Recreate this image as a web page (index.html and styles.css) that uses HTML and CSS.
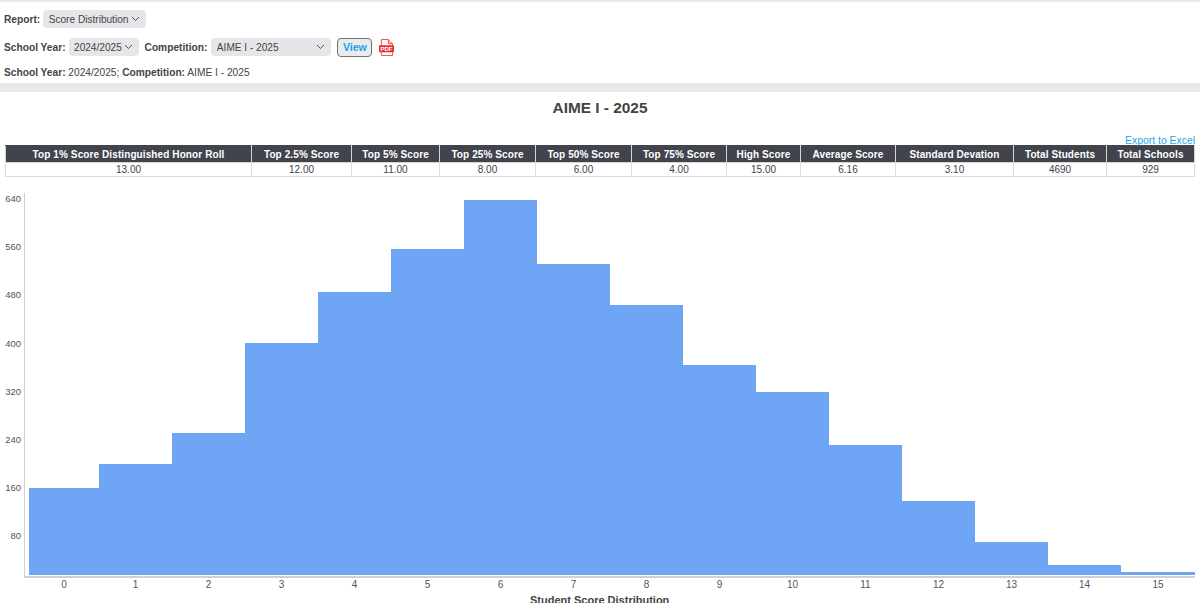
FILE: index.html
```html
<!DOCTYPE html>
<html lang="en">
<head>
<meta charset="utf-8">
<title>AIME I - 2025 Score Distribution</title>
<link rel="stylesheet" href="styles.css">
</head>
<body>
<header class="filters">
  <div class="row">
    <label class="lbl" for="report">Report:</label>
    <select id="report" class="sel sel-report"><option>Score Distribution</option></select>
  </div>
  <div class="row">
    <label class="lbl" for="year">School Year:</label>
    <select id="year" class="sel sel-year"><option>2024/2025</option></select>
    <label class="lbl lbl-comp" for="comp">Competition:</label>
    <select id="comp" class="sel sel-comp"><option>AIME I - 2025</option></select>
    <button class="view" type="button">View</button>
    <svg class="pdf" width="15" height="17" viewBox="0 0 16 18" aria-label="PDF">
      <path d="M2.5 .5H10L14.5 5V17.500H2.500Z" fill="#fff" stroke="#f0444a"/>
      <path d="M10 .5V5H14.500" fill="#fbb" stroke="#f0444a"/>
      <rect x="0" y="6.500" width="16" height="7.500" rx="1" fill="#ee2b30"/>
      <text x="8" y="12.700" class="pdf-text" text-anchor="middle">PDF</text>
    </svg>
  </div>
  <p class="summary"><b>School Year:</b> 2024/2025; <b>Competition:</b> AIME I - 2025</p>
</header>
<main>
  <h1 class="title">AIME I - 2025</h1>
  <div class="export"><a href="#">Export to Excel</a></div>
  <table class="stats">
    <thead>
      <tr>
        <th>Top 1% Score Distinguished Honor Roll</th>
        <th>Top 2.5% Score</th>
        <th>Top 5% Score</th>
        <th>Top 25% Score</th>
        <th>Top 50% Score</th>
        <th>Top 75% Score</th>
        <th>High Score</th>
        <th>Average Score</th>
        <th>Standard Devation</th>
        <th>Total Students</th>
        <th>Total Schools</th>
      </tr>
    </thead>
    <tbody>
      <tr>
        <td>13.00</td><td>12.00</td><td>11.00</td><td>8.00</td><td>6.00</td><td>4.00</td><td>15.00</td><td>6.16</td><td>3.10</td><td>4690</td><td>929</td>
      </tr>
    </tbody>
  </table>
  <section class="chart">
    <div class="yaxis">
      <span>640</span><span>560</span><span>480</span><span>400</span><span>320</span><span>240</span><span>160</span><span>80</span>
    </div>
    <div class="plotwrap">
      <div class="plot">
        <div class="bar first" style="height:87px"></div>
        <div class="bar" style="height:111px"></div>
        <div class="bar" style="height:142px"></div>
        <div class="bar" style="height:232px"></div>
        <div class="bar" style="height:283px"></div>
        <div class="bar" style="height:326px"></div>
        <div class="bar" style="height:375px"></div>
        <div class="bar" style="height:311px"></div>
        <div class="bar" style="height:270px"></div>
        <div class="bar" style="height:210px"></div>
        <div class="bar" style="height:183px"></div>
        <div class="bar" style="height:130px"></div>
        <div class="bar" style="height:74px"></div>
        <div class="bar" style="height:33px"></div>
        <div class="bar" style="height:10px"></div>
        <div class="bar last" style="height:3px"></div>
      </div>
      <div class="xaxis">
        <span class="first">0</span><span>1</span><span>2</span><span>3</span><span>4</span><span>5</span><span>6</span><span>7</span><span>8</span><span>9</span><span>10</span><span>11</span><span>12</span><span>13</span><span>14</span><span class="last">15</span>
      </div>
    </div>
  </section>
  <div class="xtitle">Student Score Distribution</div>
</main>
</body>
</html>
```
FILE: styles.css
```css
html, body {
  margin: 0;
  padding: 0;
  height: 603px;
  overflow: hidden;
  background: #fff;
}
body {
  font-family: "Liberation Sans", Arial, sans-serif;
  font-size: 10.200px;
  color: #444;
  border-top: 2px solid #e9e9e9;
}
.filters {
  padding: 8px 4px 0;
  height: 73px;
  border-bottom: 9px solid #e9e9e9;
}
.row {
  display: flex;
  align-items: center;
  height: 18px;
  margin-bottom: 10px;
}
.lbl {
  font-weight: bold;
  margin-right: 3px;
}
.lbl-comp {
  margin-left: 6px;
  margin-right: 4px;
}
.sel {
  appearance: none;
  -webkit-appearance: none;
  height: 18px;
  border: 0;
  border-radius: 4px;
  padding: 0 0 0 5.500px;
  font: 10.100px "Liberation Sans", Arial, sans-serif;
  color: #444;
  background-color: #e4e6ea;
  background-image: url("data:image/svg+xml,%3Csvg xmlns='http://www.w3.org/2000/svg' width='9' height='6'%3E%3Cpath d='M1 1l3.500 3.500L8 1' fill='none' stroke='%23555' stroke-width='1'/%3E%3C/svg%3E");
  background-repeat: no-repeat;
  background-position: right 6px center;
}
.sel-report { width: 103px; }
.sel-year { width: 70px; }
.sel-comp { width: 120px; }
.view {
  width: 35px;
  height: 19px;
  margin-left: 6px;
  padding: 0;
  border: 1px solid #6f7378;
  border-radius: 4px;
  background: #e9ebee;
  color: #19a5e6;
  font: bold 10.500px "Liberation Sans", Arial, sans-serif;
}
.pdf {
  margin-left: 7px;
  flex: none;
}
.pdf-text {
  font: bold 6.500px "Liberation Sans", Arial, sans-serif;
  fill: #fff;
}
.summary {
  margin: 0;
  line-height: 13px;
}
.title {
  margin: 0;
  padding-top: 7px;
  height: 27px;
  line-height: 18px;
  font-size: 15.400px;
  font-weight: bold;
  text-align: center;
  color: #444;
}
.export {
  margin-top: 9px;
  height: 10px;
  padding-right: 5px;
  line-height: 11px;
  font-size: 10.400px;
  text-align: right;
}
.export a {
  color: #1fa8e8;
  text-decoration: none;
}
.stats {
  table-layout: fixed;
  border-collapse: collapse;
  width: 1189px;
  margin: 0 5px;
}
.stats th {
  box-sizing: border-box;
  height: 17px;
  padding: 0;
  background: #41444c;
  color: #fff;
  font-size: 10px;
  font-weight: bold;
  border: 1px solid #d6d6d6;
  border-top-color: #41444c;
  letter-spacing: .1px;
}
.stats td {
  height: 13px;
  padding: 0;
  text-align: center;
  font-size: 10px;
  line-height: 13px;
  border: 1px solid #dcdcdc;
}
.stats th:nth-child(1) { width: 246px; }
.stats th:nth-child(2) { width: 100px; }
.stats th:nth-child(3) { width: 88px; }
.stats th:nth-child(4) { width: 96px; }
.stats th:nth-child(5) { width: 96px; }
.stats th:nth-child(6) { width: 95px; }
.stats th:nth-child(7) { width: 74px; }
.stats th:nth-child(8) { width: 95px; }
.stats th:nth-child(9) { width: 118px; }
.stats th:nth-child(10) { width: 93px; }
.stats th:nth-child(11) { width: 88px; }
.chart {
  display: flex;
  margin-top: 16px;
  height: 398px;
}
.yaxis {
  flex: none;
  width: 21px;
  display: flex;
  flex-direction: column;
  gap: 36.200px;
  align-items: flex-end;
  margin-right: 3px;
  font-size: 9.500px;
  line-height: 12px;
  color: #555;
}
.yaxis span { height: 12px; }
.plotwrap {
  flex: 1;
  margin-right: 5px;
}
.plot {
  height: 382px;
  display: flex;
  align-items: flex-end;
  padding-left: 4px;
  padding-bottom: 1px;
  border-left: 1px solid #d0d0d0;
  border-bottom: 2px solid #d0d0d0;
}
.bar {
  width: 73px;
  flex: none;
  background: #6ea6f5;
}
.bar.first { width: 70px; }
.bar.last { width: 74px; }
.xaxis {
  display: flex;
  padding-left: 5px;
  height: 14px;
  line-height: 14px;
  font-size: 10px;
  color: #555;
}
.xaxis span {
  width: 73px;
  flex: none;
  text-align: center;
}
.xaxis .first { width: 70px; }
.xaxis .last { width: 74px; }
.xtitle {
  margin-top: 3px;
  padding-left: 530px;
  font-size: 11px;
  font-weight: bold;
  line-height: 13px;
}
```
